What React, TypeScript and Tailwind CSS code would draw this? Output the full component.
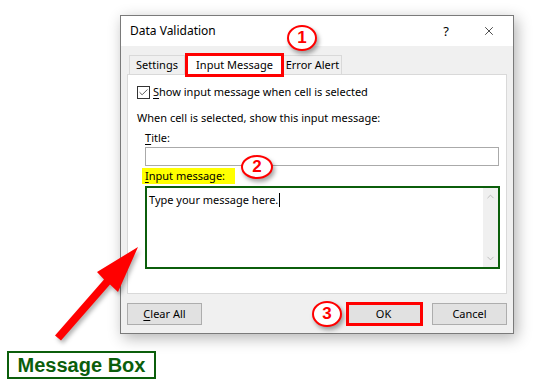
import { X, ChevronUp, ChevronDown, Check } from "lucide-react";

function Underlined({ text }: { text: string }) {
  return (
    <>
      <span className="underline underline-offset-2">{text[0]}</span>
      {text.slice(1)}
    </>
  );
}

function Bubble({ n, className }: { n: string; className: string }) {
  return (
    <div
      className={
        "absolute z-20 flex items-center justify-center rounded-[50%] border-[2.5px] border-[#ff0000] bg-white shadow-[2px_3px_4px_rgba(0,0,0,0.35)] font-['Liberation_Sans',Arial,sans-serif] text-[17px] font-bold text-[#ff0000] " +
        className
      }
    >
      {n}
    </div>
  );
}

function DialogButton({ label, underline }: { label: string; underline?: boolean }) {
  return (
    <button className="flex h-[22px] w-[75px] items-center justify-center border border-[#adadad] bg-[#e1e1e1] text-[11px] text-black">
      {underline ? <Underlined text={label} /> : label}
    </button>
  );
}

export default function App() {
  return (
    <div className="relative h-[387px] w-[545px] overflow-hidden bg-white font-['Segoe_UI','Noto_Sans',sans-serif] text-[11px] leading-[16px] text-black">
      <div className="pl-[120px] pt-[15px]">
        <div className="flex h-[319px] w-[394px] flex-col border border-[#7a7a7a] bg-[#f0f0f0] shadow-[3px_4px_14px_rgba(0,0,0,0.3)]">
          {/* title bar */}
          <div className="flex h-[30px] items-center bg-white pl-[9px]">
            <span className="text-[12px]">Data Validation</span>
            <span className="ml-auto mr-[33px] text-[13px]">?</span>
            <X className="mr-[17px] h-[14px] w-[14px]" strokeWidth={1.2} />
          </div>

          <div className="flex flex-1 flex-col px-[6px]">
            {/* tabs */}
            <div className="flex h-[28px] items-end pl-[2px]">
              <div className="flex h-[19px] w-[56px] items-center justify-center border border-b-0 border-[#d9d9d9] bg-[#f0f0f0]">
                Settings
              </div>
              <div className="relative z-10 -mb-px flex h-[22px] w-[99px] items-center justify-center border border-b-0 border-[#d9d9d9] bg-white">
                Input Message
              </div>
              <div className="flex h-[19px] w-[58px] items-center justify-center border border-b-0 border-l-0 border-[#d9d9d9] bg-[#f0f0f0]">
                Error Alert
              </div>
            </div>

            {/* panel */}
            <div className="flex h-[220px] flex-col border border-[#d9d9d9] bg-white pl-[9px] pr-[7px]">
              <div className="mt-[9px] flex h-[16px] items-center gap-[3px]">
                <div className="flex h-[13px] w-[13px] items-center justify-center border border-[#333]">
                  <Check className="h-[11px] w-[11px] text-[#222]" strokeWidth={1.6} />
                </div>
                <span>
                  <Underlined text="Show input message when cell is selected" />
                </span>
              </div>
              <div className="mt-[10px]">When cell is selected, show this input message:</div>
              <div className="mt-[4px] pl-[8px]">
                <Underlined text="Title:" />
              </div>
              <div className="ml-[8px] mt-[1px] h-[19px] shrink-0 border border-[#aaaaaa] bg-white" />
              <div className="mt-[2px] pl-[5px]">
                <span className="inline-block h-[16px] w-[93px] bg-[#ffff00] pl-[3px]">
                  <Underlined text="Input message:" />
                </span>
              </div>
              <div className="ml-[8px] mr-[-1px] mt-[2px] flex h-[83px] shrink-0 border-2 border-[#0b5e0b] bg-white">
                <div className="flex-1 pl-[2px] pt-[2px]">
                  Type your message here.
                  <span className="ml-[1px] inline-block h-[14px] w-px translate-y-[3px] bg-black" />
                </div>
                <div className="flex w-[15px] flex-col items-center justify-between bg-[#f0f0f0] py-[3px] text-[#a6a6a6]">
                  <ChevronUp className="h-[11px] w-[11px]" strokeWidth={1.5} />
                  <ChevronDown className="h-[11px] w-[11px]" strokeWidth={1.5} />
                </div>
              </div>
            </div>

            {/* buttons */}
            <div className="mt-[9px] flex items-center">
              <DialogButton label="Clear All" underline />
              <div className="ml-auto flex gap-[11px]">
                <DialogButton label="OK" />
                <DialogButton label="Cancel" />
              </div>
            </div>
          </div>
        </div>
      </div>

      {/* annotations */}
      <div className="absolute left-[185px] top-[53px] z-20 h-[24px] w-[99px] border-[3px] border-[#ff0000]" />
      <div className="absolute left-[346px] top-[302px] z-20 h-[24px] w-[77px] border-[3px] border-[#ff0000]" />
      <Bubble n="1" className="left-[287px] top-[25px] h-[26px] w-[30px]" />
      <Bubble n="2" className="left-[241px] top-[155px] h-[24px] w-[32px]" />
      <Bubble n="3" className="left-[312px] top-[301px] h-[26px] w-[30px]" />

      <svg className="absolute left-0 top-0 z-20 h-[387px] w-[545px] drop-shadow-[2px_3px_2px_rgba(0,0,0,0.3)]" viewBox="0 0 545 387">
        <polygon
          points="138,247 118,292 110,284.6 61,340.6 55,335.4 104,279.4 97,272"
          fill="#ff0000"
        />
      </svg>

      <div className="absolute left-[7px] top-[351px] z-20 flex h-[28px] w-[149px] items-center justify-center border-2 border-[#0b5e0b] bg-white font-['Liberation_Sans',Arial,sans-serif] text-[20px] font-bold text-[#0b5e0b]">
        Message Box
      </div>
    </div>
  );
}
